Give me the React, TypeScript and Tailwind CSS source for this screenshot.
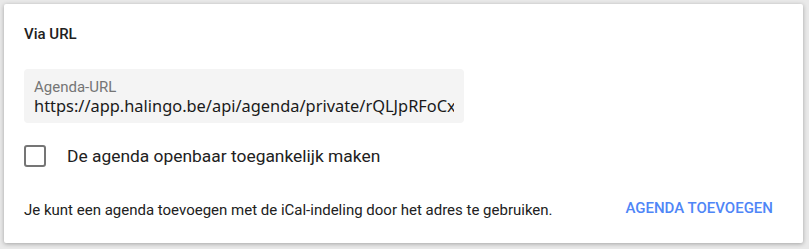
import { useState } from "react";

export default function App() {
  const [isPublic, setIsPublic] = useState(false);
  const url = "https://app.halingo.be/api/agenda/private/rQLJpRFoCxY2hT8mN4kd";

  return (
    <main className="w-[809px] h-[249px] bg-[#e9e9e9] pt-[4px] pl-[4px] font-['Roboto',sans-serif]">
      <div className="w-[799px] h-[239px] bg-white rounded-[2px] shadow-[0_1px_4px_rgba(0,0,0,0.3)] px-[20px] pt-[20px]">
        <h2 className="text-[15px] leading-[20px] font-medium text-[#212121]">Via URL</h2>

        <div className="mt-[25px] w-[440px] h-[54px] bg-[#f4f4f4] rounded-[4px] pl-[10px] pr-[10px] pt-[9px]">
          <div className="text-[15px] leading-[18px] text-[#757575]">Agenda-URL</div>
          <div className="w-[420px] text-[16.4px] leading-[20px] text-[#1a1a1a] whitespace-nowrap overflow-hidden font-['Noto_Sans',sans-serif]">
            {url}
          </div>
        </div>

        <label className="mt-[22px] flex items-center cursor-pointer">
          <button
            type="button"
            onClick={() => setIsPublic(!isPublic)}
            className="w-[22px] h-[22px] border-[2px] border-[#757575] rounded-[3px] bg-white shrink-0"
          />
          <span className="ml-[21px] text-[17.4px] leading-[22px] text-[#212121]">
            De agenda openbaar toegankelijk maken
          </span>
        </label>

        <div className="mt-[31px] flex items-center justify-between pr-[10px]">
          <p className="text-[15px] leading-[20px] text-[#212121]">
            Je kunt een agenda toevoegen met de iCal-indeling door het adres te gebruiken.
          </p>
          <button type="button" className="text-[15px] leading-[20px] font-medium text-[#4f86f7] mb-[4px]">
            AGENDA TOEVOEGEN
          </button>
        </div>
      </div>
    </main>
  );
}
